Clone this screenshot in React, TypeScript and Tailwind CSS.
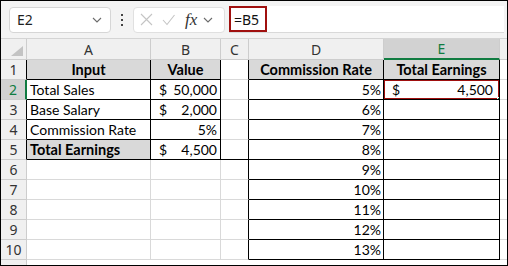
import type { ReactNode } from "react";

const CELL_FONT = { fontFamily: "Lato, 'Liberation Sans', sans-serif" };

// column widths (px), right border included
const W = { hdr: 26, a: 124, b: 70, c: 28, d: 135, e: 116 };

function Cell({
  w,
  className = "",
  children,
}: {
  w: number;
  className?: string;
  children?: ReactNode;
}) {
  return (
    <div
      className={`h-full shrink-0 border-r border-b flex items-center overflow-hidden whitespace-nowrap ${className}`}
      style={{ width: w }}
    >
      {children}
    </div>
  );
}

function Money({ value, pr = "pr-[3px]" }: { value: string; pr?: string }) {
  return (
    <div className={`flex w-full justify-between pl-[8px] ${pr}`}>
      <span>$</span>
      <span>{value}</span>
    </div>
  );
}

function Chevron({ className = "" }: { className?: string }) {
  return (
    <svg width="10" height="6" viewBox="0 0 10 6" className={className}>
      <path d="M1 1 L5 5 L9 1" fill="none" stroke="#6b6b6b" strokeWidth="1.1" />
    </svg>
  );
}

function FormulaBar() {
  return (
    <div className="h-[37px] bg-[#f3f3f3] flex items-center pl-[8px] pr-[3px]">
      <div className="w-[102px] h-[26px] bg-white border border-[#d6d6d6] rounded-[4px] flex items-center justify-between pl-[7px] pr-[8px]">
        <span className="text-[14px] text-[#1f1f1f]" style={{ fontFamily: "'Noto Sans', sans-serif" }}>
          E2
        </span>
        <Chevron />
      </div>
      <div className="w-[22px] flex flex-col items-center gap-[3px]">
        <span className="w-[2px] h-[2px] bg-[#444]" />
        <span className="w-[2px] h-[2px] bg-[#444]" />
        <span className="w-[2px] h-[2px] bg-[#444]" />
      </div>
      <div className="w-[92px] h-[26px] bg-white border border-[#e0e0e0] rounded-[4px] flex items-center pl-[6px]">
        <svg width="13" height="13" viewBox="0 0 13 13">
          <path d="M1 1 L12 12 M12 1 L1 12" stroke="#c4c4c4" strokeWidth="1.1" />
        </svg>
        <svg width="13" height="12" viewBox="0 0 13 12" className="ml-[9px]">
          <path d="M1 6 L5 10.5 L12.5 1" fill="none" stroke="#c4c4c4" strokeWidth="1.1" />
        </svg>
        <span
          className="ml-[10px] text-[17px] italic text-[#333] leading-none"
          style={{ fontFamily: "'Liberation Serif', serif" }}
        >
          fx
        </span>
        <Chevron className="ml-[6px]" />
      </div>
      <div className="ml-[4px] flex-1 h-[27px] bg-white border-b border-[#d9d9d9] flex">
        <div className="w-[38px] h-full border-2 border-[#a0100f] flex items-center pl-[3px]">
          <span className="text-[14px] text-[#111]" style={{ fontFamily: "'Noto Sans', sans-serif" }}>
            =B5
          </span>
        </div>
      </div>
    </div>
  );
}

function ColumnHeaders() {
  const base = "justify-center text-[14px] text-[#333] bg-[#f0f0f0] border-r-[#cdcdcd]";
  return (
    <div className="flex h-[22px] border-t border-[#d4d4d4]" style={{ fontFamily: "'Noto Sans', sans-serif" }}>
      <Cell w={W.hdr} className="bg-[#f0f0f0] border-r-[#cdcdcd] border-b-[#cdcdcd] relative">
        <svg width="12" height="10" viewBox="0 0 12 10" className="absolute right-[3px] bottom-[3px]">
          <path d="M12 0 L12 10 L0 10 Z" fill="#c3c3c3" />
        </svg>
      </Cell>
      <Cell w={W.a} className={`${base} border-b-[#cdcdcd]`}>A</Cell>
      <Cell w={W.b} className={`${base} border-b-[#cdcdcd]`}>B</Cell>
      <Cell w={W.c} className={`${base} border-b-[#cdcdcd]`}>C</Cell>
      <Cell w={W.d} className={`${base} border-b-[#cdcdcd]`}>D</Cell>
      <Cell w={W.e} className="justify-center text-[14px] text-[#107c41] bg-[#d2d2d2] border-r-[#cdcdcd] border-b-2 border-b-[#107c41]">
        E
      </Cell>
      <div className="flex-1 h-full bg-[#f0f0f0] border-b border-[#cdcdcd]" />
    </div>
  );
}

type Row = {
  n: number;
  a?: ReactNode;
  b?: ReactNode;
  d?: string;
};

const rows: Row[] = [
  { n: 1, a: "Input", b: "Value", d: "Commission Rate" },
  { n: 2, a: "Total Sales", b: <Money value="50,000" />, d: "5%" },
  { n: 3, a: "Base Salary", b: <Money value="2,000" />, d: "6%" },
  { n: 4, a: "Commission Rate", b: "5%", d: "7%" },
  { n: 5, a: "Total Earnings", b: <Money value="4,500" />, d: "8%" },
  { n: 6, d: "9%" },
  { n: 7, d: "10%" },
  { n: 8, d: "11%" },
  { n: 9, d: "12%" },
  { n: 10, d: "13%" },
];

function SheetRow({ row }: { row: Row }) {
  const { n } = row;
  const inTable1 = n <= 5;
  const hdrSel = n === 2;
  const grid = "border-[#d9d9d9]";
  const black = "border-black";
  const bold = "font-bold text-[14.5px]";

  // row header
  const hdrCls = `justify-center text-[14px] border-b-[#cdcdcd] ${
    hdrSel ? "bg-[#d2d2d2] text-[#107c41] border-r-2 border-r-[#107c41]" : "bg-[#f0f0f0] text-[#333]"
  } ${!hdrSel ? (inTable1 ? "border-r-black" : "border-r-[#cdcdcd]") : ""}`;

  const aCls = inTable1
    ? `${black} ${n === 1 || n === 5 ? `bg-[#d9d9d9] ${bold}` : "bg-white"} ${n === 1 ? "justify-center" : "pl-[3px]"}`
    : `${grid} bg-white`;
  const bCls = inTable1
    ? `${black} ${n === 1 ? `bg-[#d9d9d9] ${bold} justify-center` : "bg-white"} ${n === 4 ? "justify-end pr-[3px]" : ""}`
    : `${grid} bg-white`;
  const cCls = `bg-white border-r-black ${n === 5 ? "border-b-black" : "border-b-[#d9d9d9]"}`;
  const dCls = `${black} ${n === 1 ? `bg-[#d9d9d9] ${bold} justify-center` : "bg-white justify-end pr-[2px]"}`;
  const eCls = `${black} ${n === 1 ? `bg-[#d9d9d9] ${bold} justify-center` : "bg-white"} ${
    n === 2 ? "relative" : ""
  }`;

  return (
    <div className="flex h-[20px] text-[14px] text-black" style={CELL_FONT}>
      <Cell w={W.hdr} className={hdrCls}>
        <span style={{ fontFamily: "'Noto Sans', sans-serif" }}>{n}</span>
      </Cell>
      <Cell w={W.a} className={aCls}>{row.a}</Cell>
      <Cell w={W.b} className={bCls}>{row.b}</Cell>
      <Cell w={W.c} className={cCls} />
      <Cell w={W.d} className={dCls}>{row.d}</Cell>
      <Cell w={W.e} className={eCls}>
        {n === 1 && "Total Earnings"}
        {n === 2 && (
          <>
            <div className="absolute -left-[1px] -top-[1px] w-[117px] h-[21px] border-2 border-[#a0100f]" />
            <div className="absolute right-[-3px] bottom-[-3px] w-[5px] h-[5px] bg-[#107c41] border border-white" />
            <Money value="4,500" pr="pr-[6px]" />
          </>
        )}
      </Cell>
      <div className="flex-1 h-full border-b border-[#d9d9d9] bg-white" />
    </div>
  );
}

export default function App() {
  return (
    <div className="w-[508px] h-[266px] border border-black overflow-hidden bg-white">
      <FormulaBar />
      <ColumnHeaders />
      {rows.map((r) => (
        <SheetRow key={r.n} row={r} />
      ))}
      <div className="flex h-[20px]">
        <div className="w-[26px] h-full bg-[#f0f0f0] border-r border-[#cdcdcd] flex justify-center text-[14px] text-[#333]" style={{ fontFamily: "'Noto Sans', sans-serif" }}>
          11
        </div>
        <div className="flex-1" />
      </div>
    </div>
  );
}
